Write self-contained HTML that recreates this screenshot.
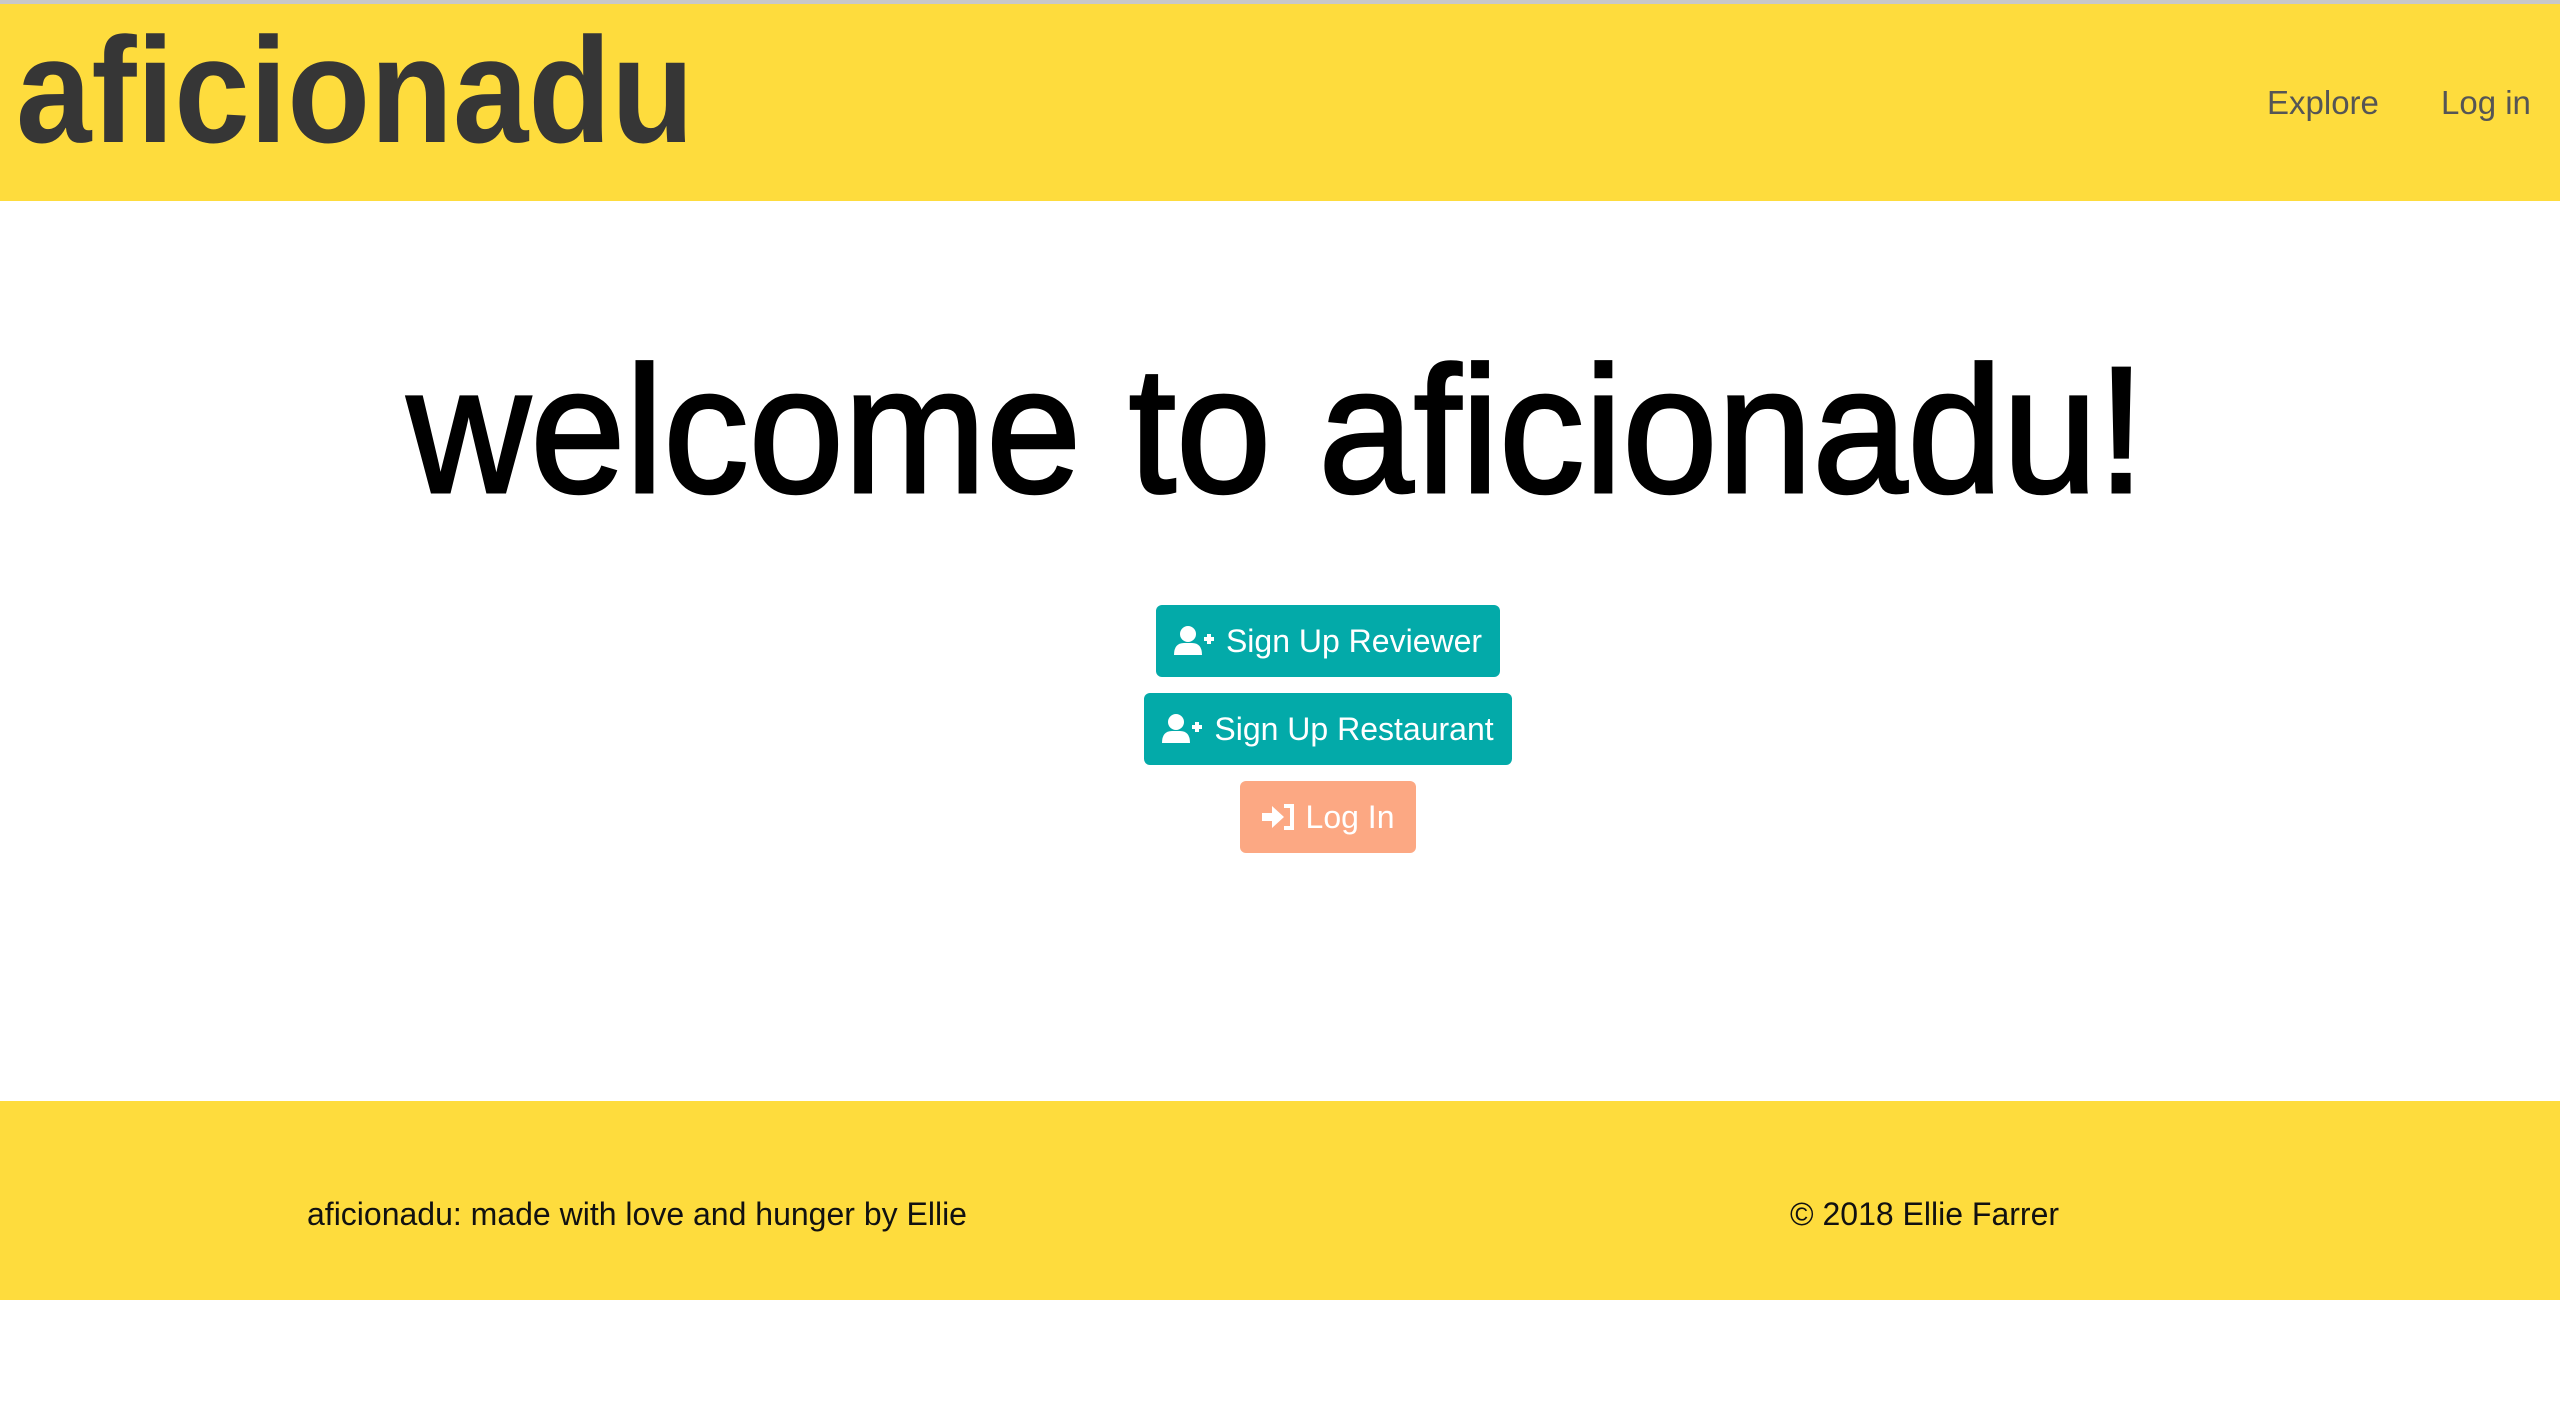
<!DOCTYPE html>
<html><head><meta charset="utf-8"><style>
html,body{margin:0;padding:0;width:2560px;height:1411px;background:#fff;overflow:hidden;font-family:"Liberation Sans",sans-serif;}
.topline{position:absolute;left:0;top:0;width:2560px;height:4px;background:#c8c8c8;}
.header{position:absolute;left:0;top:4px;width:2560px;height:197px;background:#FEDC3D;}
.nav{position:absolute;top:84px;font-size:33px;color:#555;}
.footer{position:absolute;left:0;top:1101px;width:2560px;height:199px;background:#FEDC3D;}
.ft{position:absolute;top:1196px;font-size:32px;color:#111;}
.btn{position:absolute;border-radius:6px;color:#fff;font-size:32px;display:flex;align-items:center;justify-content:center;box-sizing:border-box;}
.teal{background:#03AAA9;}
.sal{background:#FCA883;}
.btn svg{margin-right:10px;}
</style></head><body>
<div class="topline"></div>
<div class="header"></div>
<svg style="position:absolute;left:0;top:0" width="720" height="200">
<text x="16" y="142" font-family="Liberation Sans, sans-serif" font-weight="bold" font-size="150" fill="#363636" textLength="678" lengthAdjust="spacingAndGlyphs">aficionadu</text>
</svg>
<div class="nav" style="left:2267px">Explore</div>
<div class="nav" style="left:2441px">Log in</div>
<svg style="position:absolute;left:0;top:330px" width="2560" height="200">
<text x="407" y="162" font-family="Liberation Sans, sans-serif" font-size="180" fill="#000" stroke="#000" stroke-width="3" textLength="1738" lengthAdjust="spacingAndGlyphs">welcome to aficionadu!</text>
</svg>
<div class="btn teal" style="left:1156px;top:605px;width:344px;height:72px">
<svg width="42" height="32" viewBox="0 0 42 32"><circle cx="14" cy="9" r="8" fill="#fff"/><path d="M0 30 Q0 18 10 18 H18 Q28 18 28 30 Z" fill="#fff"/><path d="M30 14 H40 M35 9 V19" stroke="#fff" stroke-width="4"/></svg>Sign Up Reviewer</div>
<div class="btn teal" style="left:1144px;top:693px;width:368px;height:72px">
<svg width="42" height="32" viewBox="0 0 42 32"><circle cx="14" cy="9" r="8" fill="#fff"/><path d="M0 30 Q0 18 10 18 H18 Q28 18 28 30 Z" fill="#fff"/><path d="M30 14 H40 M35 9 V19" stroke="#fff" stroke-width="4"/></svg>Sign Up Restaurant</div>
<div class="btn sal" style="left:1240px;top:781px;width:176px;height:72px">
<svg width="34" height="28" viewBox="0 0 34 28"><path d="M0 10 H10 V3 L22 14 L10 25 V18 H0 Z" fill="#fff"/><path d="M22 3 H30 V25 H22" stroke="#fff" stroke-width="4" fill="none"/></svg>Log In</div>
<div class="footer"></div>
<div class="ft" style="left:307px">aficionadu: made with love and hunger by Ellie</div>
<div class="ft" style="left:1790px">© 2018 Ellie Farrer</div>
</body></html>
